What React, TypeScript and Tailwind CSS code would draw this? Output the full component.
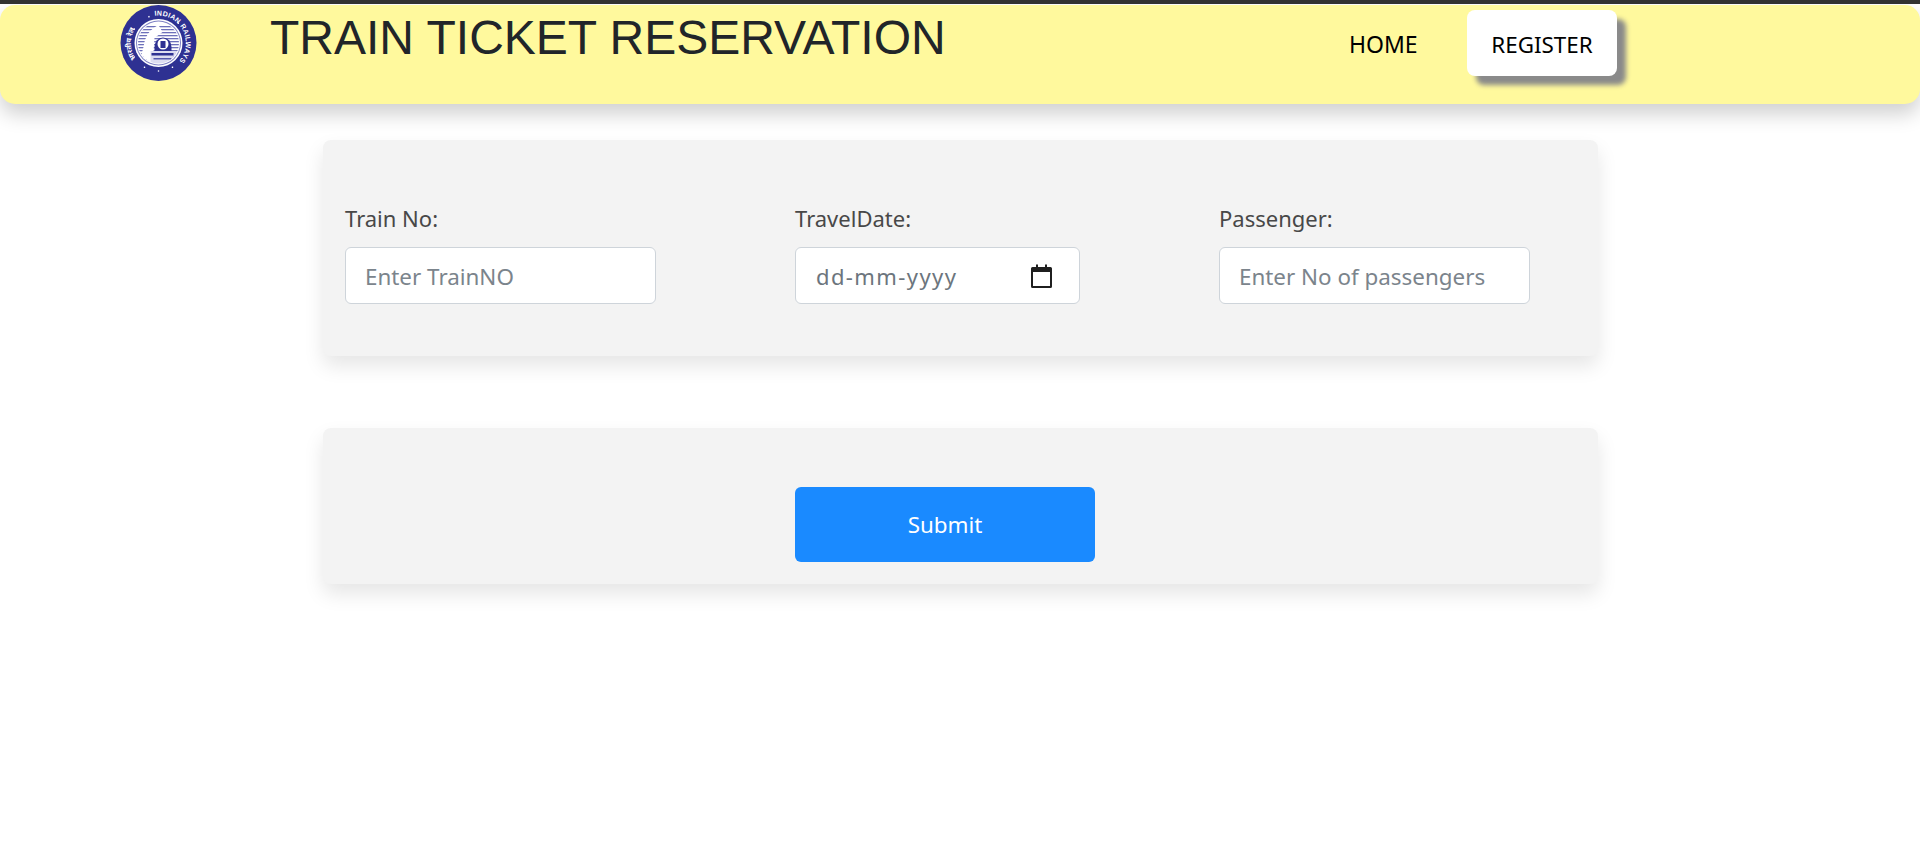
const Logo = () => {
  const stripes = [21, 24, 27, 30, 33, 36, 39, 42, 45, 48, 51, 54];
  const dots = [-20, 45, 90, 150, 180, 210, 240, 300];
  return (
    <svg width="77" height="76" viewBox="0 0 76 76" className="block">
      <defs>
        <path id="englishArc" d="M34.2 10.8 A27.5 27.5 0 0 1 57.4 57.4" />
        <path id="hindiArc" d="M15.5 53.8 A27.5 27.5 0 0 1 26.4 13.1" />
        <clipPath id="inner">
          <circle cx="38" cy="38" r="20.5" />
        </clipPath>
      </defs>
      <circle cx="38" cy="38" r="38" fill="#2e3192" />
      <text fontFamily="Liberation Sans, sans-serif" fontSize="7" fontWeight="700" fill="#fff">
        <textPath href="#englishArc" textLength="66">
          INDIAN RAILWAYS
        </textPath>
      </text>
      <text fontFamily="Noto Sans, sans-serif" fontSize="7" fontWeight="700" fill="#fff">
        <textPath href="#hindiArc">भारतीय रेल</textPath>
      </text>
      <circle cx="38" cy="38" r="24" fill="#fff" />
      <circle cx="38" cy="38" r="22.5" fill="#7f81c4" />
      <circle cx="38" cy="38" r="21.5" fill="#fff" />
      <g clipPath="url(#inner)">
        {stripes.map((y) => (
          <rect key={y} x="15" y={y} width="46" height="1.3" fill="#6d70ba" />
        ))}
        <path d="M18 60 L23 42 Q25 26 38 20 L42 27 L34 33 L32 60 Z" fill="#fff" />
        <rect x="30" y="46" width="26" height="14" fill="#dcdcf0" />
        <path d="M34 42 a8.5 9.5 0 0 1 17 0 v4 h-17 Z" fill="#2e3192" />
        <circle cx="42.5" cy="39" r="5.5" fill="#fff" />
        <rect x="40" y="36" width="5" height="7" fill="#2e3192" />
        <rect x="31" y="48" width="22" height="2.5" fill="#2e3192" />
        <rect x="33" y="53" width="18" height="1.5" fill="#5558ad" />
      </g>
      <g fill="#fff">
        {dots.map((a) => (
          <circle key={a} cx="38" cy="10" r="0.8" transform={`rotate(${a} 38 38)`} />
        ))}
      </g>
    </svg>
  );
};

const CalendarIcon = () => (
  <svg width="21" height="24" viewBox="0 0 21 24" className="block">
    <path d="M5 0.5h2V3h7V0.5h2V3h3.5A1.5 1.5 0 0 1 21 4.5v18a1.5 1.5 0 0 1-1.5 1.5h-18A1.5 1.5 0 0 1 0 22.500v-18A1.5 1.5 0 0 1 1.500 3H5Z" fill="#1f1f1f" />
    <rect x="2" y="8" width="17" height="14" fill="#fff" />
  </svg>
);

const fieldClass =
  "h-[57px] rounded-[6px] border border-[#ced4da] bg-white px-[19px] pt-[2px] text-[22.4px] text-[#495057] placeholder:text-[#7b848c] outline-none";

const labelClass = "mb-[14px] block text-[22px] leading-[30px] text-[#484848]";

const Field = ({ label, placeholder, column }: { label: string; placeholder: string; column: string }) => (
  <div className={column}>
    <label className={labelClass}>{label}</label>
    <input type="text" placeholder={placeholder} className={`${fieldClass} block w-[311px]`} />
  </div>
);

export default function App() {
  return (
    <div className="min-h-[841px] bg-white font-['Noto_Sans',sans-serif]">
      <div className="h-[5px] border-t-[4px] border-[#333333] bg-white" />
      <header className="flex h-[99px] items-start rounded-[15px] bg-[#fff99d] shadow-[0_10px_20px_rgba(0,0,0,0.19)]">
        <div className="ml-[120px] w-[77px] shrink-0">
          <Logo />
        </div>
        <h1 className="ml-[73px] mt-[8px] w-[1079px] shrink-0 font-['Liberation_Sans',sans-serif] text-[48px] leading-[50px] text-[#212529]">
          TRAIN TICKET RESERVATION
        </h1>
        <nav className="mt-[5px] flex shrink-0 items-center text-black">
          <a className="w-[118px] pt-[3px] text-left text-[23px]">HOME</a>
          <a className="flex h-[66px] w-[150px] items-center justify-center rounded-[8px] bg-white pt-[3px] text-[22.4px] shadow-[9px_9px_5px_#8a8a8a]">
            REGISTER
          </a>
        </nav>
      </header>

      <main className="ml-[323px] mt-[36px] flex w-[1275px] flex-col gap-[72px]">
        <section className="flex h-[216px] rounded-[8px] bg-[#f3f3f3] pl-[22px] pt-[63px] shadow-[0_10px_20px_rgba(0,0,0,0.1)]">
          <Field label="Train No:" placeholder="Enter TrainNO" column="w-[450px]" />
          <div className="w-[424px]">
            <label className={labelClass}>TravelDate:</label>
            <div className="flex h-[57px] w-[285px] items-center justify-between rounded-[6px] border border-[#ced4da] bg-white pl-[20px] pr-[27px]">
              <input type="text" placeholder="dd-mm-yyyy" className="w-[170px] pt-[2px] text-[22px] tracking-[1.4px] outline-none placeholder:text-[#6c757d]" />
              <CalendarIcon />
            </div>
          </div>
          <Field label="Passenger:" placeholder="Enter No of passengers" column="w-[311px]" />
        </section>

        <section className="h-[156px] rounded-[8px] bg-[#f3f3f3] pl-[472px] pt-[59px] shadow-[0_10px_20px_rgba(0,0,0,0.1)]">
          <button className="h-[75px] w-[300px] rounded-[6px] bg-[#1a8aff] text-[22.4px] text-white">Submit</button>
        </section>
      </main>
    </div>
  );
}
